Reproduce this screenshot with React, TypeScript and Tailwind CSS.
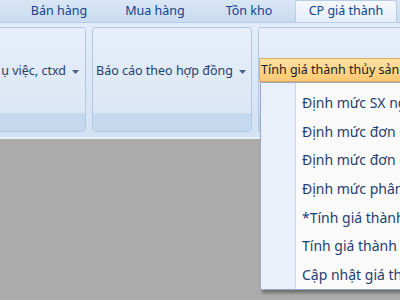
import React from 'react';

const tabs = [
  { label: 'Bán hàng', w: 'w-[96px]' },
  { label: 'Mua hàng', w: 'w-[96px]' },
  { label: 'Tồn kho', w: 'w-[92px]' },
];

const menuItems = [
  'Định mức SX nguyên liệu',
  'Định mức đơn giá nhân công',
  'Định mức đơn giá vật tư',
  'Định mức phân bổ chi phí',
  '*Tính giá thành sản phẩm',
  'Tính giá thành thủy sản',
  'Cập nhật giá thành',
];

const Caret = () => (
  <svg width="7" height="4" viewBox="0 0 7 4" className="ml-[6px] mt-[2px] shrink-0">
    <path d="M0 0h7L3.5 4z" fill="#4a5f7d" />
  </svg>
);

const App: React.FC = () => {
  return (
    <div className="w-[400px] h-[300px] bg-[#ababab] overflow-hidden relative font-['Noto_Sans',sans-serif] text-[12.5px] text-[#1f3f6e]">
      {/* tab row */}
      <div className="h-[22px] bg-gradient-to-b from-[#d9e6f5] to-[#cadcf1] flex pl-[11px] items-end">
        {tabs.map(t => (
          <div key={t.label} className={`${t.w} h-[22px] flex items-center justify-center text-[#15428b]`}>
            {t.label}
          </div>
        ))}
        <div className="w-[102px] h-[22px] flex items-center justify-center bg-gradient-to-b from-[#f5f8fc] to-[#e5eef9] border border-b-0 border-[#b9cde6] rounded-t-[3px] text-[#15428b]">
          CP giá thành
        </div>
      </div>

      {/* ribbon body */}
      <div className="h-[117px] bg-gradient-to-b from-[#e3edf9] to-[#d3e2f4] border-t border-[#b9cde6] border-b-2 border-b-[#e8f0fa] flex gap-[6px] pt-[4px] pb-[5px]">
        <div className="-ml-[4px] w-[90px] shrink-0 rounded-[3px] border border-[#b3c8e2] flex flex-col overflow-hidden">
          <div className="flex-1 bg-gradient-to-b from-[#e6eef9] to-[#dce7f5] flex items-center justify-end pr-[6px] pt-[1px] whitespace-nowrap">
            <span>ụ việc, ctxd</span>
            <Caret />
          </div>
          <div className="h-[18px] bg-[#c4d8ee]" />
        </div>
        <div className="w-[160px] shrink-0 rounded-[3px] border border-[#b3c8e2] flex flex-col overflow-hidden">
          <div className="flex-1 bg-gradient-to-b from-[#e6eef9] to-[#dce7f5] flex items-center pl-[3px] pt-[1px] whitespace-nowrap">
            <span>Báo cáo theo hợp đồng</span>
            <Caret />
          </div>
          <div className="h-[18px] bg-[#c4d8ee]" />
        </div>
        <div className="flex-1 min-w-0 rounded-l-[3px] border border-r-0 border-[#b3c8e2] flex flex-col overflow-hidden">
          <div className="flex-1 bg-gradient-to-b from-[#e6eef9] to-[#dce7f5] pt-[30px]">
            <div className="h-[24px] bg-gradient-to-b from-[#ffe3a0] to-[#ffc873] border border-r-0 border-[#e3ad5c] flex items-center pl-[1px] whitespace-nowrap text-[12.5px] text-[#1b1b1b]">
              Tính giá thành thủy sản
            </div>
          </div>
          <div className="h-[18px] bg-[#c4d8ee]" />
        </div>
      </div>

      {/* dropdown menu */}
      <div className="absolute left-[260px] top-[82px] w-[170px] h-[208px] bg-[#fafafa] border border-[#97a9c4] shadow-[2px_3px_3px_rgba(0,0,0,0.35)] flex overflow-hidden">
        <div className="w-[35px] shrink-0 bg-[#e9f0f9] border-r border-[#c5d4e6]" />
        <div className="flex-1 min-w-0 flex flex-col pt-[5px]">
          {menuItems.map(m => (
            <div key={m} className="h-[28.7px] flex items-center pl-[6px] whitespace-nowrap text-[14px] text-[#1f3f6e]">
              {m}
            </div>
          ))}
        </div>
      </div>
    </div>
  );
};

export default App;
